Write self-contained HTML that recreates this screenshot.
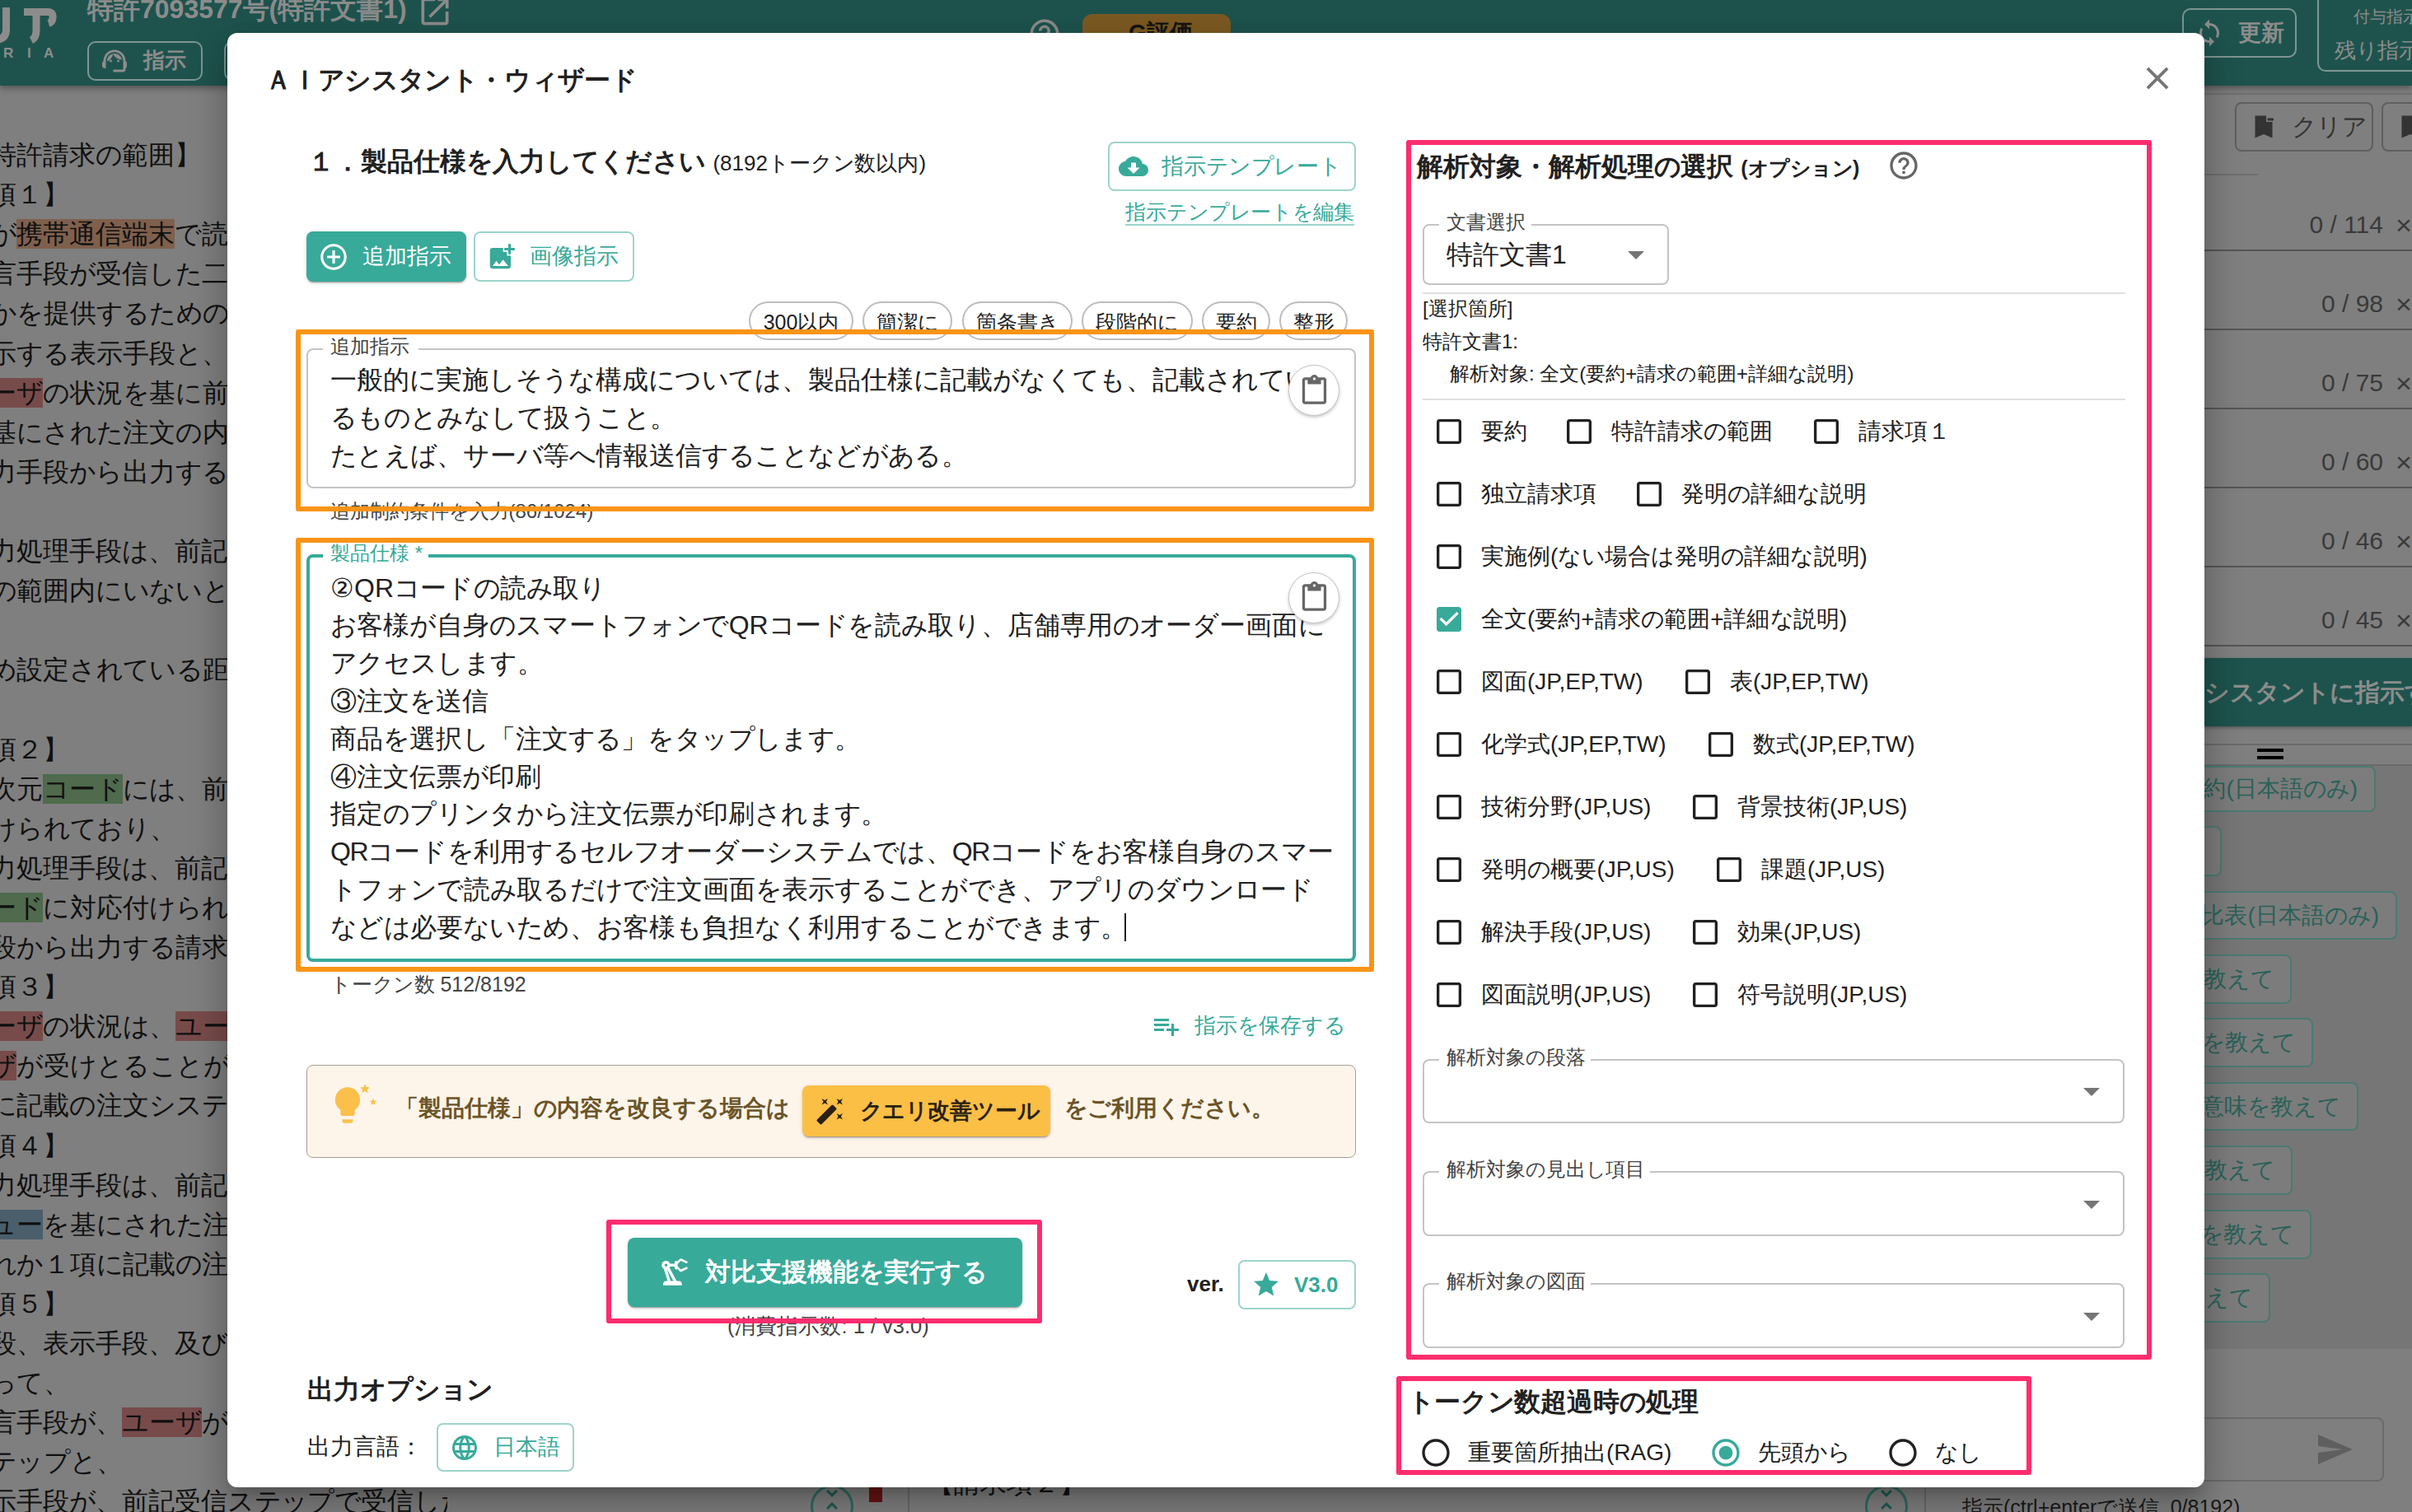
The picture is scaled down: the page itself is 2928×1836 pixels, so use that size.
<!DOCTYPE html><html><head><meta charset="utf-8"><style>
html,body{margin:0;padding:0;}
body{width:2928px;height:1836px;position:relative;overflow:hidden;background:#7f7f7f;font-family:"Liberation Sans",sans-serif;}
.k{letter-spacing:-0.02em}
.a{position:absolute;white-space:nowrap;box-sizing:border-box;}
</style></head><body>
<div class="a" style="left:0px;top:0px;width:2928px;height:104px;background:#1e534d;box-shadow:0 3px 8px rgba(0,0,0,.35)"></div>
<svg class="a" style="left:0;top:0;width:80px;height:60px" viewBox="0 0 80 60"><g fill="none" stroke="#8c8c8c" stroke-width="9" stroke-linecap="butt"><path d="M7.5 9 V36 Q7.5 46 -2 48"/><path d="M29 14.5 H58 Q65 14.5 64 22 Q63.5 27 59 28.5"/><path d="M44 19 V37 Q44 46 38 49"/></g></svg>
<div class="a" style="left:4px;top:53.0px;font-size:17px;line-height:24px;color:#8c8c8c;font-weight:700;">R</div>
<div class="a" style="left:33px;top:53.0px;font-size:17px;line-height:24px;color:#8c8c8c;font-weight:700;">I</div>
<div class="a" style="left:53px;top:53.0px;font-size:17px;line-height:24px;color:#8c8c8c;font-weight:700;">A</div>
<div class="a" style="left:106px;top:-11.0px;font-size:32px;line-height:44px;color:#8c8c8c;font-weight:700;">特許7093577号(特許文書1)</div>
<svg class="a" style="left:506px;top:-8px;width:44px;height:44px;" viewBox="0 0 24 24"><path fill="#8c8c8c" d="M19 19H5V5h7V3H5c-1.11 0-2 .9-2 2v14c0 1.1.89 2 2 2h14c1.1 0 2-.9 2-2v-7h-2v7zM14 3v2h3.59l-9.83 9.83 1.41 1.41L19 6.41V10h2V3h-7z"/></svg>
<div class="a" style="left:106px;top:50px;width:140px;height:48px;border:2px solid #7f9693;border-radius:10px"></div>
<svg class="a" style="left:121px;top:56px;width:36px;height:36px;" viewBox="0 0 24 24"><path fill="#8c8c8c" d="M21 12.22C21 6.73 16.74 3 12 3c-4.69 0-9 3.65-9 9.28-.6.34-1 .98-1 1.72v2c0 1.1.9 2 2 2h1v-6.1c0-3.87 3.13-7 7-7s7 3.13 7 7V19h-8v2h8c1.1 0 2-.9 2-2v-1.22c.59-.31 1-.92 1-1.64v-2.3c0-.7-.41-1.31-1-1.62zM9 13a1 1 0 1 0 0-2 1 1 0 0 0 0 2zm6 0a1 1 0 1 0 0-2 1 1 0 0 0 0 2zM18 11.03C17.52 8.18 15.04 6 12.05 6c-3.03 0-6.29 2.51-6.03 6.45 2.47-1.01 4.33-3.21 4.86-5.89 1.31 2.63 4 4.44 7.12 4.47z"/></svg>
<div class="a" style="left:174px;top:53.0px;font-size:26px;line-height:40px;color:#8c8c8c;font-weight:700;">指示</div>
<div class="a" style="left:272px;top:50px;width:128px;height:48px;border:2px solid #7f9693;border-radius:10px"></div>
<svg class="a" style="left:1247px;top:20px;width:42px;height:42px;" viewBox="0 0 24 24"><path fill="#8c8c8c" d="M11 18h2v-2h-2v2zm1-16C6.48 2 2 6.48 2 12s4.48 10 10 10 10-4.48 10-10S17.52 2 12 2zm0 18c-4.41 0-8-3.59-8-8s3.59-8 8-8 8 3.59 8 8-3.59 8-8 8zm0-14c-2.21 0-4 1.79-4 4h2c0-1.1.9-2 2-2s2 .9 2 2c0 2-3 1.75-3 5h2c0-2.25 3-2.5 3-5 0-2.21-1.79-4-4-4z"/></svg>
<div class="a" style="left:1314px;top:17px;width:180px;height:63px;background:#7d5a22;border-radius:12px"></div>
<div class="a" style="left:1370px;top:20.0px;font-size:28px;line-height:40px;color:#141414;font-weight:700;">G評価</div>
<div class="a" style="left:2649px;top:10px;width:139px;height:60px;border:2px solid #7f9693;border-radius:10px"></div>
<svg class="a" style="left:2664px;top:22px;width:36px;height:36px;" viewBox="0 0 24 24"><path fill="#8c8c8c" d="M12 4V1L8 5l4 4V6c3.31 0 6 2.69 6 6 0 1.01-.25 1.97-.7 2.8l1.46 1.46C19.54 15.03 20 13.57 20 12c0-4.42-3.58-8-8-8zm0 14c-3.31 0-6-2.69-6-6 0-1.01.25-1.97.7-2.8L5.24 7.74C4.46 8.97 4 10.43 4 12c0 4.42 3.58 8 8 8v3l4-4-4-4v3z"/></svg>
<div class="a" style="left:2717px;top:20.0px;font-size:28px;line-height:40px;color:#8c8c8c;font-weight:700;">更新</div>
<div class="a" style="left:2813px;top:-12px;width:147px;height:99px;border:2px solid #7f9693;border-radius:10px"></div>
<div class="a" style="left:2857px;top:5.0px;font-size:20px;line-height:30px;color:#8c8c8c;font-weight:400;">付与指示</div>
<div class="a" style="left:2834px;top:43.0px;font-size:26px;line-height:36px;color:#8c8c8c;font-weight:400;">残<span class="k">り</span>指示</div>
<div class="a" style="left:2676px;top:113px;width:252px;height:2px;background:#6e6e6e"></div>
<div class="a" style="left:2713px;top:124px;width:168px;height:60px;border:2px solid #5f5f5f;border-radius:8px"></div>
<svg class="a" style="left:2730px;top:136px;width:36px;height:36px" viewBox="0 0 24 24"><path fill="#333" d="M5 3h9v5h5v13l-7-3-7 3z"/><path fill="#333" d="M15 5h5v2h-5z"/></svg>
<div class="a" style="left:2782px;top:134.0px;font-size:30px;line-height:40px;color:#333;font-weight:400;"><span class="k">クリア</span></div>
<div class="a" style="left:2891px;top:124px;width:99px;height:60px;border:2px solid #5f5f5f;border-radius:8px"></div>
<svg class="a" style="left:2908px;top:136px;width:36px;height:36px" viewBox="0 0 24 24"><path fill="#333" d="M5 3h14v18l-7-3-7 3z"/></svg>
<div class="a" style="left:2676px;top:211px;width:65px;height:2px;background:#6e6e6e"></div>
<div class="a" style="right:35px;top:253px;font-size:30px;line-height:40px;color:#3a3a3a">0 / 114</div>
<div class="a" style="left:2908px;top:253.0px;font-size:34px;line-height:40px;color:#3a3a3a;font-weight:400;">×</div>
<div class="a" style="left:2676px;top:303px;width:252px;height:2px;background:#555"></div>
<div class="a" style="right:35px;top:349px;font-size:30px;line-height:40px;color:#3a3a3a">0 / 98</div>
<div class="a" style="left:2908px;top:349.0px;font-size:34px;line-height:40px;color:#3a3a3a;font-weight:400;">×</div>
<div class="a" style="left:2676px;top:399px;width:252px;height:2px;background:#555"></div>
<div class="a" style="right:35px;top:445px;font-size:30px;line-height:40px;color:#3a3a3a">0 / 75</div>
<div class="a" style="left:2908px;top:445.0px;font-size:34px;line-height:40px;color:#3a3a3a;font-weight:400;">×</div>
<div class="a" style="left:2676px;top:495px;width:252px;height:2px;background:#555"></div>
<div class="a" style="right:35px;top:541px;font-size:30px;line-height:40px;color:#3a3a3a">0 / 60</div>
<div class="a" style="left:2908px;top:541.0px;font-size:34px;line-height:40px;color:#3a3a3a;font-weight:400;">×</div>
<div class="a" style="left:2676px;top:591px;width:252px;height:2px;background:#555"></div>
<div class="a" style="right:35px;top:637px;font-size:30px;line-height:40px;color:#3a3a3a">0 / 46</div>
<div class="a" style="left:2908px;top:637.0px;font-size:34px;line-height:40px;color:#3a3a3a;font-weight:400;">×</div>
<div class="a" style="left:2676px;top:687px;width:252px;height:2px;background:#555"></div>
<div class="a" style="right:35px;top:733px;font-size:30px;line-height:40px;color:#3a3a3a">0 / 45</div>
<div class="a" style="left:2908px;top:733.0px;font-size:34px;line-height:40px;color:#3a3a3a;font-weight:400;">×</div>
<div class="a" style="left:2676px;top:783px;width:252px;height:2px;background:#555"></div>
<div class="a" style="left:2676px;top:799px;width:252px;height:83px;background:#1e534d;box-shadow:0 2px 4px rgba(0,0,0,.3)"></div>
<div class="a" style="left:2646px;top:819.0px;font-size:30px;line-height:44px;color:#8c8c8c;font-weight:700;"><span class="k">アシスタントに</span>指示<span class="k">する</span></div>
<div class="a" style="left:2676px;top:903px;width:252px;height:2px;background:#6a6a6a"></div>
<div class="a" style="left:2740px;top:909px;width:32px;height:4px;background:#000"></div>
<div class="a" style="left:2740px;top:918px;width:32px;height:4px;background:#000"></div>
<div class="a" style="left:2676px;top:928px;width:252px;height:2px;background:#6a6a6a"></div>
<div class="a" style="left:2676px;top:930px;width:252px;height:708px;background:#767676"></div>
<div class="a" style="left:2560px;top:930px;width:324px;height:56px;border:2px solid #4b7a73;border-radius:8px;background:#7c7c7c"></div>
<div class="a" style="right:66px;top:938.0px;font-size:28px;line-height:40px;color:#2a6159">要約(日本語<span class="k">のみ</span>)</div>
<div class="a" style="left:2560px;top:1003px;width:137px;height:61px;border:2px solid #4b7a73;border-radius:8px;background:#7c7c7c"></div>
<div class="a" style="right:253px;top:1013.5px;font-size:28px;line-height:40px;color:#2a6159"><span class="k">る</span></div>
<div class="a" style="left:2560px;top:1082px;width:350px;height:59px;border:2px solid #4b7a73;border-radius:8px;background:#7c7c7c"></div>
<div class="a" style="right:40px;top:1091.5px;font-size:28px;line-height:40px;color:#2a6159">対比表(日本語<span class="k">のみ</span>)</div>
<div class="a" style="left:2560px;top:1159px;width:222px;height:60px;border:2px solid #4b7a73;border-radius:8px;background:#7c7c7c"></div>
<div class="a" style="right:168px;top:1169.0px;font-size:28px;line-height:40px;color:#2a6159"><span class="k">を</span>教<span class="k">えて</span></div>
<div class="a" style="left:2560px;top:1236px;width:248px;height:60px;border:2px solid #4b7a73;border-radius:8px;background:#7c7c7c"></div>
<div class="a" style="right:142px;top:1246.0px;font-size:28px;line-height:40px;color:#2a6159">味<span class="k">を</span>教<span class="k">えて</span></div>
<div class="a" style="left:2560px;top:1314px;width:303px;height:59px;border:2px solid #4b7a73;border-radius:8px;background:#7c7c7c"></div>
<div class="a" style="right:87px;top:1323.5px;font-size:28px;line-height:40px;color:#2a6159"><span class="k">の</span>意味<span class="k">を</span>教<span class="k">えて</span></div>
<div class="a" style="left:2560px;top:1391px;width:223px;height:60px;border:2px solid #4b7a73;border-radius:8px;background:#7c7c7c"></div>
<div class="a" style="right:167px;top:1401.0px;font-size:28px;line-height:40px;color:#2a6159"><span class="k">を</span>教<span class="k">えて</span></div>
<div class="a" style="left:2560px;top:1469px;width:246px;height:60px;border:2px solid #4b7a73;border-radius:8px;background:#7c7c7c"></div>
<div class="a" style="right:144px;top:1479.0px;font-size:28px;line-height:40px;color:#2a6159">味<span class="k">を</span>教<span class="k">えて</span></div>
<div class="a" style="left:2560px;top:1546px;width:196px;height:60px;border:2px solid #4b7a73;border-radius:8px;background:#7c7c7c"></div>
<div class="a" style="right:194px;top:1556.0px;font-size:28px;line-height:40px;color:#2a6159">教<span class="k">えて</span></div>
<div class="a" style="left:2560px;top:1721px;width:334px;height:78px;border:2px solid #6a6a6a;border-radius:8px"></div>
<svg class="a" style="left:2810px;top:1736px;width:48px;height:48px;" viewBox="0 0 24 24"><path fill="#5f5f5f" d="M2.01 21 23 12 2.01 3 2 10l15 2-15 2z"/></svg>
<div class="a" style="left:2336px;top:1760px;width:2px;height:76px;background:#6a6a6a"></div>
<div class="a" style="left:2264px;top:1803px;width:52px;height:52px;border:3px solid #2f6b63;border-radius:50%"></div>
<svg class="a" style="left:2272px;top:1803px;width:36px;height:36px;" viewBox="0 0 24 24"><path fill="#1f5a52" d="M7.41 18.59 8.83 20 12 16.83 15.17 20l1.41-1.41L12 14l-4.59 4.59zm9.18-13.18L15.17 4 12 7.17 8.83 4 7.41 5.41 12 10l4.59-4.59z"/></svg>
<div class="a" style="left:2382px;top:1812.0px;font-size:25px;line-height:36px;color:#1a1a1a;font-weight:400;">指示(ctrl+enter<span class="k">で</span>送信, 0/8192)</div>
<div class="a" style="left:0;top:0;width:543px;height:1836px;overflow:hidden">
<div class="a" style="left:-12px;top:164.0px;font-size:32px;line-height:48px;color:#101010">特許請求<span class="k">の</span>範囲】</div>
<div class="a" style="left:-12px;top:212.1px;font-size:32px;line-height:48px;color:#101010">項１】</div>
<div class="a" style="left:-12px;top:260.2px;font-size:32px;line-height:48px;color:#101010"><span class="k">が</span><span style="background:#7f604d">携帯通信端末</span><span class="k">で</span>読</div>
<div class="a" style="left:-12px;top:308.3px;font-size:32px;line-height:48px;color:#101010">言手段<span class="k">が</span>受信<span class="k">した</span>二</div>
<div class="a" style="left:-12px;top:356.4px;font-size:32px;line-height:48px;color:#101010"><span class="k">かを</span>提供<span class="k">するための</span></div>
<div class="a" style="left:-12px;top:404.5px;font-size:32px;line-height:48px;color:#101010">示<span class="k">する</span>表示手段<span class="k">と</span>、</div>
<div class="a" style="left:-12px;top:452.6px;font-size:32px;line-height:48px;color:#101010"><span style="background:#784b4b">ー<span class="k">ザ</span></span><span class="k">の</span>状況<span class="k">を</span>基<span class="k">に</span>前</div>
<div class="a" style="left:-12px;top:500.7px;font-size:32px;line-height:48px;color:#101010">基<span class="k">にされた</span>注文<span class="k">の</span>内</div>
<div class="a" style="left:-12px;top:548.8px;font-size:32px;line-height:48px;color:#101010">力手段<span class="k">から</span>出力<span class="k">する</span></div>
<div class="a" style="left:-12px;top:596.9px;font-size:32px;line-height:48px;color:#101010"></div>
<div class="a" style="left:-12px;top:645.0px;font-size:32px;line-height:48px;color:#101010">力処理手段<span class="k">は</span>、前記</div>
<div class="a" style="left:-12px;top:693.1px;font-size:32px;line-height:48px;color:#101010"><span class="k">の</span>範囲内<span class="k">にいないと</span></div>
<div class="a" style="left:-12px;top:741.2px;font-size:32px;line-height:48px;color:#101010"></div>
<div class="a" style="left:-12px;top:789.3px;font-size:32px;line-height:48px;color:#101010"><span class="k">め</span>設定<span class="k">されている</span>距</div>
<div class="a" style="left:-12px;top:837.4px;font-size:32px;line-height:48px;color:#101010"></div>
<div class="a" style="left:-12px;top:885.5px;font-size:32px;line-height:48px;color:#101010">項２】</div>
<div class="a" style="left:-12px;top:933.6px;font-size:32px;line-height:48px;color:#101010">次元<span style="background:#4f6a4d"><span class="k">コ</span>ー<span class="k">ド</span></span><span class="k">には</span>、前</div>
<div class="a" style="left:-12px;top:981.7px;font-size:32px;line-height:48px;color:#101010"><span class="k">けられており</span>、</div>
<div class="a" style="left:-12px;top:1029.8px;font-size:32px;line-height:48px;color:#101010">力処理手段<span class="k">は</span>、前記</div>
<div class="a" style="left:-12px;top:1077.9px;font-size:32px;line-height:48px;color:#101010"><span style="background:#4f6a4d">ー<span class="k">ド</span></span><span class="k">に</span>対応付<span class="k">けられ</span></div>
<div class="a" style="left:-12px;top:1126.0px;font-size:32px;line-height:48px;color:#101010">段<span class="k">から</span>出力<span class="k">する</span>請求</div>
<div class="a" style="left:-12px;top:1174.1px;font-size:32px;line-height:48px;color:#101010">項３】</div>
<div class="a" style="left:-12px;top:1222.2px;font-size:32px;line-height:48px;color:#101010"><span style="background:#784b4b">ー<span class="k">ザ</span></span><span class="k">の</span>状況<span class="k">は</span>、<span style="background:#784b4b"><span class="k">ユ</span>ー</span></div>
<div class="a" style="left:-12px;top:1270.3px;font-size:32px;line-height:48px;color:#101010"><span style="background:#784b4b"><span class="k">ザ</span></span><span class="k">が</span>受<span class="k">けとることが</span></div>
<div class="a" style="left:-12px;top:1318.4px;font-size:32px;line-height:48px;color:#101010"><span class="k">に</span>記載<span class="k">の</span>注文<span class="k">システ</span></div>
<div class="a" style="left:-12px;top:1366.5px;font-size:32px;line-height:48px;color:#101010">項４】</div>
<div class="a" style="left:-12px;top:1414.6px;font-size:32px;line-height:48px;color:#101010">力処理手段<span class="k">は</span>、前記</div>
<div class="a" style="left:-12px;top:1462.7px;font-size:32px;line-height:48px;color:#101010"><span style="background:#4a5e6c"><span class="k">ュ</span>ー</span><span class="k">を</span>基<span class="k">にされた</span>注</div>
<div class="a" style="left:-12px;top:1510.8px;font-size:32px;line-height:48px;color:#101010"><span class="k">れか</span>１項<span class="k">に</span>記載<span class="k">の</span>注</div>
<div class="a" style="left:-12px;top:1558.9px;font-size:32px;line-height:48px;color:#101010">項５】</div>
<div class="a" style="left:-12px;top:1607.0px;font-size:32px;line-height:48px;color:#101010">段、表示手段、及<span class="k">び</span></div>
<div class="a" style="left:-12px;top:1655.1px;font-size:32px;line-height:48px;color:#101010"><span class="k">って</span>、</div>
<div class="a" style="left:-12px;top:1703.2px;font-size:32px;line-height:48px;color:#101010">言手段<span class="k">が</span>、<span style="background:#784b4b"><span class="k">ユ</span>ー<span class="k">ザ</span></span><span class="k">が</span></div>
<div class="a" style="left:-12px;top:1751.3px;font-size:32px;line-height:48px;color:#101010"><span class="k">テップと</span>、</div>
<div class="a" style="left:-12px;top:1799.4px;font-size:32px;line-height:48px;color:#101010">示手段<span class="k">が</span>、前記受信<span class="k">ステップで</span>受信<span class="k">した</span></div>
</div>
<div class="a" style="left:984px;top:1803px;width:52px;height:52px;border:3px solid #2f6b63;border-radius:50%"></div>
<svg class="a" style="left:992px;top:1803px;width:36px;height:36px;" viewBox="0 0 24 24"><path fill="#1f5a52" d="M7.41 18.59 8.83 20 12 16.83 15.17 20l1.41-1.41L12 14l-4.59 4.59zm9.18-13.18L15.17 4 12 7.17 8.83 4 7.41 5.41 12 10l4.59-4.59z"/></svg>
<div class="a" style="left:1055px;top:1800px;width:16px;height:24px;background:#6a1414"></div>
<div class="a" style="left:1102px;top:1760px;width:2px;height:76px;background:#6a6a6a"></div>
<div class="a" style="left:1126px;top:1777.0px;font-size:32px;line-height:48px;color:#101010;font-weight:400;">【請求項２】</div>
<div class="a" style="left:276px;top:40px;width:2400px;height:1766px;background:#fff;border-radius:12px;box-shadow:0 11px 15px -7px rgba(0,0,0,.2),0 24px 38px 3px rgba(0,0,0,.14),0 9px 46px 8px rgba(0,0,0,.12)"></div>
<div class="a" style="left:322px;top:73.0px;font-size:32px;line-height:48px;color:#212121;font-weight:700;">ＡＩ<span class="k">アシスタント</span>・<span class="k">ウィザ</span>ー<span class="k">ド</span></div>
<svg class="a" style="left:2596px;top:72px;width:46px;height:46px;" viewBox="0 0 24 24"><path fill="#757575" d="M19 6.41 17.59 5 12 10.59 6.41 5 5 6.41 10.59 12 5 17.59 6.41 19 12 13.41 17.59 19 19 17.59 13.41 12z"/></svg>
<div class="a" style="left:374px;top:172.0px;font-size:32px;line-height:48px;color:#212121;font-weight:700;">１．製品仕様<span class="k">を</span>入力<span class="k">してください</span> <span style="font-size:26px;font-weight:400">(8192<span class="k">ト</span>ー<span class="k">クン</span>数以内)</span></div>
<div class="a" style="left:1345px;top:172px;width:301px;height:60px;border:2px solid #9dd4cc;border-radius:8px"></div>
<svg class="a" style="left:1358px;top:184px;width:36px;height:36px;" viewBox="0 0 24 24"><path fill="#38aa9a" d="M19.35 10.04C18.67 6.59 15.64 4 12 4 9.11 4 6.6 5.64 5.35 8.04 2.34 8.36 0 10.91 0 14c0 3.31 2.69 6 6 6h13c2.76 0 5-2.24 5-5 0-2.64-2.05-4.78-4.65-4.96zM17 13l-5 5-5-5h3V9h4v4h3z"/></svg>
<div class="a" style="left:1410px;top:182.0px;font-size:27px;line-height:40px;color:#38aa9a;font-weight:400;">指示<span class="k">テンプレ</span>ー<span class="k">ト</span></div>
<div class="a" style="left:1366px;top:240.0px;font-size:24.6px;line-height:36px;color:#38aa9a;font-weight:400;text-decoration:underline;text-decoration-color:#9dd4cc;text-underline-offset:6px">指示<span class="k">テンプレ</span>ー<span class="k">トを</span>編集</div>
<div class="a" style="left:372px;top:281px;width:194px;height:61px;background:#38aa9a;border-radius:8px;box-shadow:0 3px 1px -2px rgba(0,0,0,.2),0 2px 2px 0 rgba(0,0,0,.14),0 1px 5px 0 rgba(0,0,0,.12)"></div>
<svg class="a" style="left:386px;top:293px;width:38px;height:38px;" viewBox="0 0 24 24"><path fill="#fff" d="M13 7h-2v4H7v2h4v4h2v-4h4v-2h-4V7zm-1-5C6.48 2 2 6.48 2 12s4.48 10 10 10 10-4.48 10-10S17.52 2 12 2zm0 18c-4.41 0-8-3.59-8-8s3.59-8 8-8 8 3.59 8 8-3.59 8-8 8z"/></svg>
<div class="a" style="left:440px;top:291.0px;font-size:27px;line-height:40px;color:#fff;font-weight:400;">追加指示</div>
<div class="a" style="left:575px;top:281px;width:195px;height:61px;border:2px solid #9dd4cc;border-radius:8px"></div>
<svg class="a" style="left:590px;top:293px;width:38px;height:38px;" viewBox="0 0 24 24"><path fill="#38aa9a" d="M19 7v2.99s-1.99.01-2 0V7h-3s.01-1.99 0-2h3V2h2v3h3v2h-3zm-3 4V8h-3V5H5c-1.1 0-2 .9-2 2v12c0 1.1.9 2 2 2h12c1.1 0 2-.9 2-2v-8h-3zM5 19l3-4 2 3 3-4 4 5H5z"/></svg>
<div class="a" style="left:643px;top:291.0px;font-size:27px;line-height:40px;color:#38aa9a;font-weight:400;">画像指示</div>
<div class="a" style="left:909px;top:366px;width:127px;height:47px;border:2px solid #bdbdbd;border-radius:24px;background:#fff"></div>
<div class="a" style="left:909px;width:127px;top:371px;font-size:25px;line-height:40px;text-align:center;color:#212121">300以内</div>
<div class="a" style="left:1047px;top:366px;width:109px;height:47px;border:2px solid #bdbdbd;border-radius:24px;background:#fff"></div>
<div class="a" style="left:1047px;width:109px;top:371px;font-size:25px;line-height:40px;text-align:center;color:#212121">簡潔<span class="k">に</span></div>
<div class="a" style="left:1168px;top:366px;width:134px;height:47px;border:2px solid #bdbdbd;border-radius:24px;background:#fff"></div>
<div class="a" style="left:1168px;width:134px;top:371px;font-size:25px;line-height:40px;text-align:center;color:#212121">箇条書<span class="k">き</span></div>
<div class="a" style="left:1313px;top:366px;width:135px;height:47px;border:2px solid #bdbdbd;border-radius:24px;background:#fff"></div>
<div class="a" style="left:1313px;width:135px;top:371px;font-size:25px;line-height:40px;text-align:center;color:#212121">段階的<span class="k">に</span></div>
<div class="a" style="left:1459px;top:366px;width:83px;height:47px;border:2px solid #bdbdbd;border-radius:24px;background:#fff"></div>
<div class="a" style="left:1459px;width:83px;top:371px;font-size:25px;line-height:40px;text-align:center;color:#212121">要約</div>
<div class="a" style="left:1553px;top:366px;width:83px;height:47px;border:2px solid #bdbdbd;border-radius:24px;background:#fff"></div>
<div class="a" style="left:1553px;width:83px;top:371px;font-size:25px;line-height:40px;text-align:center;color:#212121">整形</div>
<div class="a" style="left:372px;top:423px;width:1274px;height:170px;border:2px solid #c4c4c4;border-radius:8px"></div>
<div class="a" style="left:392px;top:410px;width:116px;height:26px;background:#fff"></div>
<div class="a" style="left:401px;top:406.0px;font-size:24px;line-height:30px;color:#444;font-weight:400;">追加指示</div>
<div class="a" style="left:401px;top:438.0px;font-size:32px;line-height:46px;color:#212121;font-weight:400;">一般的<span class="k">に</span>実施<span class="k">しそうな</span>構成<span class="k">については</span>、製品仕様<span class="k">に</span>記載<span class="k">がなくても</span>、記載<span class="k">されてい</span></div>
<div class="a" style="left:401px;top:484.0px;font-size:32px;line-height:46px;color:#212121;font-weight:400;"><span class="k">るものとみなして</span>扱<span class="k">うこと</span>。</div>
<div class="a" style="left:401px;top:530.0px;font-size:32px;line-height:46px;color:#212121;font-weight:400;"><span class="k">たとえば</span>、<span class="k">サ</span>ー<span class="k">バ</span>等<span class="k">へ</span>情報送信<span class="k">することなどがある</span>。</div>
<div class="a" style="left:1564px;top:443px;width:62px;height:62px;background:#fff;border:1.5px solid #c6c6c6;border-radius:50%;box-shadow:0 2px 4px -1px rgba(0,0,0,.2),0 1px 4px 0 rgba(0,0,0,.1)"></div>
<svg class="a" style="left:1575.5px;top:454.5px;width:39px;height:39px;" viewBox="0 0 24 24"><path fill="#666" d="M19 2h-4.18C14.4.84 13.3 0 12 0c-1.3 0-2.4.84-2.82 2H5c-1.1 0-2 .9-2 2v16c0 1.1.9 2 2 2h14c1.1 0 2-.9 2-2V4c0-1.1-.9-2-2-2zm-7 0c.55 0 1 .45 1 1s-.45 1-1 1-1-.45-1-1 .45-1 1-1zm7 18H5V4h2v3h10V4h2v16z"/></svg>
<div class="a" style="left:401px;top:606.0px;font-size:24px;line-height:30px;color:#444;font-weight:400;">追加制約条件<span class="k">を</span>入力(86/1024)</div>
<div class="a" style="left:359px;top:400px;width:1309px;height:221px;border:6px solid #f99417;border-radius:3px"></div>
<div class="a" style="left:372px;top:673px;width:1274px;height:495px;border:4px solid #38aa9a;border-radius:8px"></div>
<div class="a" style="left:392px;top:660px;width:128px;height:30px;background:#fff"></div>
<div class="a" style="left:401px;top:657.0px;font-size:24px;line-height:30px;color:#38aa9a;font-weight:400;">製品仕様 *</div>
<div class="a" style="left:401px;top:690.5px;font-size:32px;line-height:46px;color:#212121;font-weight:400;">②QR<span class="k">コ</span>ー<span class="k">ドの</span>読<span class="k">み</span>取<span class="k">り</span></div>
<div class="a" style="left:401px;top:736.3px;font-size:32px;line-height:46px;color:#212121;font-weight:400;"><span class="k">お</span>客様<span class="k">が</span>自身<span class="k">のスマ</span>ー<span class="k">トフォンで</span>QR<span class="k">コ</span>ー<span class="k">ドを</span>読<span class="k">み</span>取<span class="k">り</span>、店舗専用<span class="k">のオ</span>ー<span class="k">ダ</span>ー画面<span class="k">に</span></div>
<div class="a" style="left:401px;top:782.1px;font-size:32px;line-height:46px;color:#212121;font-weight:400;"><span class="k">アクセスします</span>。</div>
<div class="a" style="left:401px;top:827.9px;font-size:32px;line-height:46px;color:#212121;font-weight:400;">③注文<span class="k">を</span>送信</div>
<div class="a" style="left:401px;top:873.7px;font-size:32px;line-height:46px;color:#212121;font-weight:400;">商品<span class="k">を</span>選択<span class="k">し</span>「注文<span class="k">する</span>」<span class="k">をタップします</span>。</div>
<div class="a" style="left:401px;top:919.5px;font-size:32px;line-height:46px;color:#212121;font-weight:400;">④注文伝票<span class="k">が</span>印刷</div>
<div class="a" style="left:401px;top:965.3px;font-size:32px;line-height:46px;color:#212121;font-weight:400;">指定<span class="k">のプリンタから</span>注文伝票<span class="k">が</span>印刷<span class="k">されます</span>。</div>
<div class="a" style="left:401px;top:1011.1px;font-size:32px;line-height:46px;color:#212121;font-weight:400;"><span style="letter-spacing:-1.5px">QR</span><span class="k">コ</span>ー<span class="k">ドを</span>利用<span class="k">するセルフオ</span>ー<span class="k">ダ</span>ー<span class="k">システムでは</span>、<span style="letter-spacing:-1.5px">QR</span><span class="k">コ</span>ー<span class="k">ドをお</span>客様自身<span class="k">のスマ</span>ー</div>
<div class="a" style="left:401px;top:1056.9px;font-size:32px;line-height:46px;color:#212121;font-weight:400;"><span class="k">トフォンで</span>読<span class="k">み</span>取<span class="k">るだけで</span>注文画面<span class="k">を</span>表示<span class="k">することができ</span>、<span class="k">アプリのダウンロ</span>ー<span class="k">ド</span></div>
<div class="a" style="left:401px;top:1102.7px;font-size:32px;line-height:46px;color:#212121;font-weight:400;"><span class="k">などは</span>必要<span class="k">ないため</span>、<span class="k">お</span>客様<span class="k">も</span>負担<span class="k">なく</span>利用<span class="k">することができます</span>。<span style="display:inline-block;width:2px;height:34px;background:#212121;vertical-align:-6px;margin-left:-3px"></span></div>
<div class="a" style="left:1564px;top:695px;width:62px;height:62px;background:#fff;border:1.5px solid #c6c6c6;border-radius:50%;box-shadow:0 2px 4px -1px rgba(0,0,0,.2),0 1px 4px 0 rgba(0,0,0,.1)"></div>
<svg class="a" style="left:1575.5px;top:706px;width:39px;height:39px;" viewBox="0 0 24 24"><path fill="#666" d="M19 2h-4.18C14.4.84 13.3 0 12 0c-1.3 0-2.4.84-2.82 2H5c-1.1 0-2 .9-2 2v16c0 1.1.9 2 2 2h14c1.1 0 2-.9 2-2V4c0-1.1-.9-2-2-2zm-7 0c.55 0 1 .45 1 1s-.45 1-1 1-1-.45-1-1 .45-1 1-1zm7 18H5V4h2v3h10V4h2v16z"/></svg>
<div class="a" style="left:359px;top:653px;width:1309px;height:527px;border:6px solid #f99417;border-radius:3px"></div>
<div class="a" style="left:401px;top:1180.0px;font-size:25px;line-height:30px;color:#444;font-weight:400;"><span class="k">ト</span>ー<span class="k">クン</span>数 512/8192</div>
<svg class="a" style="left:1398px;top:1228px;width:36px;height:36px;" viewBox="0 0 24 24"><path fill="#38aa9a" d="M14 10H2v2h12v-2zm0-4H2v2h12V6zm4 8v-4h-2v4h-4v2h4v4h2v-4h4v-2h-4zM2 16h8v-2H2v2z"/></svg>
<div class="a" style="left:1450px;top:1225.0px;font-size:26px;line-height:40px;color:#38aa9a;font-weight:400;">指示<span class="k">を</span>保存<span class="k">する</span></div>
<div class="a" style="left:372px;top:1293px;width:1274px;height:113px;background:#fdf5ea;border:1.5px solid #a89f94;border-radius:8px"></div>
<svg class="a" style="left:396px;top:1316px;width:52px;height:52px;" viewBox="0 0 24 24"><path fill="#fbbf4c" d="M9 21c0 .55.45 1 1 1h4c.55 0 1-.45 1-1v-1H9v1zm3-19C8.14 2 5 5.14 5 9c0 2.38 1.19 4.47 3 5.74V17c0 .55.45 1 1 1h6c.55 0 1-.45 1-1v-2.26c1.81-1.27 3-3.36 3-5.74 0-3.86-3.14-7-7-7z"/></svg>
<svg class="a" style="left:436px;top:1315px;width:14px;height:14px;" viewBox="0 0 24 24"><path fill="#fbbf4c" d="M12 17.27 18.18 21l-1.64-7.03L22 9.24l-7.19-.61L12 2 9.19 8.63 2 9.24l5.46 4.73L5.82 21z"/></svg>
<svg class="a" style="left:448px;top:1333px;width:10px;height:10px;" viewBox="0 0 24 24"><path fill="#fbbf4c" d="M12 17.27 18.18 21l-1.64-7.03L22 9.24l-7.19-.61L12 2 9.19 8.63 2 9.24l5.46 4.73L5.82 21z"/></svg>
<div class="a" style="left:480px;top:1326.0px;font-size:28px;line-height:40px;color:#6b5428;font-weight:700;">「製品仕様」<span class="k">の</span>内容<span class="k">を</span>改良<span class="k">する</span>場合<span class="k">は</span></div>
<div class="a" style="left:974px;top:1318px;width:301px;height:62px;background:#fcbf45;border-radius:8px;box-shadow:0 3px 1px -2px rgba(0,0,0,.2),0 2px 2px 0 rgba(0,0,0,.14),0 1px 5px 0 rgba(0,0,0,.12)"></div>
<svg class="a" style="left:990px;top:1331px;width:36px;height:36px;" viewBox="0 0 24 24"><path fill="#2a2114" d="M7.5 5.6 10 7 8.6 4.5 10 2 7.5 3.4 5 2l1.4 2.5L5 7zm12 9.8L17 14l1.4 2.5L17 19l2.5-1.4L22 19l-1.4-2.5L22 14zM22 2l-2.5 1.4L17 2l1.4 2.5L17 7l2.5-1.4L22 7l-1.4-2.5zm-7.63 5.29a.9959.9959 0 0 0-1.41 0L1.29 18.96c-.39.39-.39 1.02 0 1.41l2.34 2.34c.39.39 1.02.39 1.41 0L16.7 11.05c.39-.39.39-1.02 0-1.41l-2.33-2.35z"/></svg>
<div class="a" style="left:1044px;top:1329.0px;font-size:26.5px;line-height:40px;color:#2a2114;font-weight:700;"><span class="k">クエリ</span>改善<span class="k">ツ</span>ー<span class="k">ル</span></div>
<div class="a" style="left:1292px;top:1326.0px;font-size:28px;line-height:40px;color:#6b5428;font-weight:700;"><span class="k">をご</span>利用<span class="k">ください</span>。</div>
<div class="a" style="left:762px;top:1503px;width:479px;height:84px;background:#38aa9a;border-radius:8px;box-shadow:0 3px 1px -2px rgba(0,0,0,.2),0 2px 2px 0 rgba(0,0,0,.14),0 1px 5px 0 rgba(0,0,0,.12)"></div>
<svg class="a" style="left:798px;top:1524px;width:42px;height:42px;" viewBox="0 0 24 24"><path fill="#fff" d="M19.93 8.35l-3.6 1.68L14 7.7V6.3l2.33-2.33 3.6 1.68c.38.18.82.01 1-.36.18-.38.01-.82-.36-1l-3.92-1.83c-.38-.18-.83-.1-1.13.2L13.78 4.4c-.18-.24-.46-.4-.78-.4-.55 0-1 .45-1 1v1H8.82C8.4 4.84 7.3 4 6 4 4.34 4 3 5.34 3 7c0 1.1.6 2.05 1.48 2.57L7.08 18H6c-1.1 0-2 .9-2 2v1h13v-1c0-1.1-.9-2-2-2h-1.62L8.410 8.77c.17-.24.31-.49.41-.77H12v1c0 .55.45 1 1 1 .32 0 .6-.16.78-.4l1.74 1.74c.3.3.75.38 1.13.2l3.920-1.83c.38-.18.54-.62.36-1-.18-.37-.62-.54-1-.36zM6 8c-.55 0-1-.44-1-1 0-.55.45-1 1-1s1 .45 1 1c0 .56-.45 1-1 1zm5.11 10H9.17l-2.46-8h.1l4.3 8z"/></svg>
<div class="a" style="left:856px;top:1523.0px;font-size:31px;line-height:44px;color:#fff;font-weight:700;">対比支援機能<span class="k">を</span>実行<span class="k">する</span></div>
<div class="a" style="left:883px;top:1595.0px;font-size:25.5px;line-height:30px;color:#444;font-weight:400;">(消費指示数: 1 / v3.0)</div>
<div class="a" style="left:736px;top:1481px;width:529px;height:126px;border:6px solid #fc2d6e;border-radius:3px"></div>
<div class="a" style="left:1441px;top:1541.0px;font-size:26px;line-height:36px;color:#212121;font-weight:700;">ver.</div>
<div class="a" style="left:1503px;top:1530px;width:143px;height:60px;border:2px solid #9dd4cc;border-radius:8px"></div>
<svg class="a" style="left:1519px;top:1542px;width:36px;height:36px;" viewBox="0 0 24 24"><path fill="#38aa9a" d="M12 17.27 18.18 21l-1.64-7.03L22 9.24l-7.19-.61L12 2 9.19 8.63 2 9.24l5.46 4.73L5.82 21z"/></svg>
<div class="a" style="left:1571px;top:1542.0px;font-size:26px;line-height:36px;color:#38aa9a;font-weight:700;">V3.0</div>
<div class="a" style="left:373px;top:1665.0px;font-size:32px;line-height:44px;color:#212121;font-weight:700;">出力<span class="k">オプション</span></div>
<div class="a" style="left:373px;top:1737.0px;font-size:28px;line-height:40px;color:#212121;font-weight:400;">出力言語：</div>
<div class="a" style="left:530px;top:1728px;width:167px;height:59px;border:2px solid #9dd4cc;border-radius:8px"></div>
<svg class="a" style="left:546px;top:1740px;width:36px;height:36px;" viewBox="0 0 24 24"><path fill="#38aa9a" d="M11.99 2C6.47 2 2 6.48 2 12s4.47 10 9.99 10C17.52 22 22 17.52 22 12S17.52 2 11.99 2zm6.93 6h-2.95c-.32-1.25-.78-2.45-1.38-3.56 1.84.63 3.37 1.91 4.33 3.56zM12 4.04c.83 1.2 1.48 2.53 1.91 3.96h-3.82c.43-1.43 1.08-2.76 1.91-3.96zM4.26 14C4.1 13.36 4 12.690 4 12s.1-1.36.26-2h3.38c-.08.66-.14 1.32-.14 2 0 .68.06 1.34.14 2H4.26zm.82 2h2.95c.32 1.25.78 2.45 1.38 3.56-1.84-.63-3.37-1.9-4.33-3.56zm2.95-8H5.08c.96-1.66 2.49-2.93 4.33-3.56C8.81 5.55 8.35 6.75 8.03 8zM12 19.96c-.83-1.2-1.48-2.53-1.91-3.96h3.820c-.43 1.43-1.08 2.76-1.91 3.96zM14.34 14H9.66c-.09-.66-.16-1.32-.16-2 0-.68.07-1.35.16-2h4.68c.09.65.16 1.32.16 2 0 .68-.07 1.34-.16 2zm.25 5.56c.6-1.11 1.06-2.31 1.38-3.56h2.95c-.96 1.65-2.49 2.93-4.33 3.56zM16.36 14c.08-.66.14-1.32.14-2 0-.68-.06-1.34-.14-2h3.38c.16.64.26 1.31.26 2s-.1 1.36-.26 2h-3.38z"/></svg>
<div class="a" style="left:599px;top:1737.0px;font-size:27px;line-height:40px;color:#38aa9a;font-weight:400;">日本語</div>
<div class="a" style="left:1720px;top:178.0px;font-size:32px;line-height:48px;color:#212121;font-weight:700;">解析対象・解析処理<span class="k">の</span>選択 <span style="font-size:25px">(<span class="k">オプション</span>)</span></div>
<svg class="a" style="left:2291px;top:181px;width:40px;height:40px;" viewBox="0 0 24 24"><path fill="#666" d="M11 18h2v-2h-2v2zm1-16C6.48 2 2 6.48 2 12s4.48 10 10 10 10-4.48 10-10S17.52 2 12 2zm0 18c-4.41 0-8-3.59-8-8s3.59-8 8-8 8 3.59 8 8-3.59 8-8 8zm0-14c-2.21 0-4 1.79-4 4h2c0-1.1.9-2 2-2s2 .9 2 2c0 2-3 1.75-3 5h2c0-2.25 3-2.5 3-5 0-2.21-1.79-4-4-4z"/></svg>
<div class="a" style="left:1727px;top:272px;width:299px;height:74px;border:2px solid #c4c4c4;border-radius:8px"></div>
<div class="a" style="left:1747px;top:258px;width:112px;height:28px;background:#fff"></div>
<div class="a" style="left:1756px;top:255.0px;font-size:24px;line-height:30px;color:#444;font-weight:400;">文書選択</div>
<div class="a" style="left:1756px;top:287.0px;font-size:32px;line-height:44px;color:#212121;font-weight:400;">特許文書1</div>
<svg class="a" style="left:1962px;top:285.0px;width:48px;height:48px;" viewBox="0 0 24 24"><path fill="#757575" d="M7 10l5 5 5-5z"/></svg>
<div class="a" style="left:1727px;top:355px;width:853px;height:2px;background:#e0e0e0"></div>
<div class="a" style="left:1727px;top:358.0px;font-size:24px;line-height:34px;color:#212121;font-weight:400;">[選択箇所]</div>
<div class="a" style="left:1727px;top:398.0px;font-size:24px;line-height:34px;color:#212121;font-weight:400;">特許文書1:</div>
<div class="a" style="left:1760px;top:437.0px;font-size:24px;line-height:34px;color:#212121;font-weight:400;">解析対象: 全文(要約+請求<span class="k">の</span>範囲+詳細<span class="k">な</span>説明)</div>
<div class="a" style="left:1727px;top:484px;width:853px;height:2px;background:#e0e0e0"></div>
<svg class="a" style="left:1739px;top:503.5px;width:40px;height:40px;" viewBox="0 0 24 24"><path fill="#212121" d="M19 5v14H5V5h14m0-2H5c-1.1 0-2 .9-2 2v14c0 1.1.9 2 2 2h14c1.1 0 2-.9 2-2V5c0-1.1-.9-2-2-2z"/></svg>
<div class="a" style="left:1798px;top:503.5px;font-size:28px;line-height:40px;color:#212121;font-weight:400;">要約</div>
<svg class="a" style="left:1897px;top:503.5px;width:40px;height:40px;" viewBox="0 0 24 24"><path fill="#212121" d="M19 5v14H5V5h14m0-2H5c-1.1 0-2 .9-2 2v14c0 1.1.9 2 2 2h14c1.1 0 2-.9 2-2V5c0-1.1-.9-2-2-2z"/></svg>
<div class="a" style="left:1956px;top:503.5px;font-size:28px;line-height:40px;color:#212121;font-weight:400;">特許請求<span class="k">の</span>範囲</div>
<svg class="a" style="left:2197px;top:503.5px;width:40px;height:40px;" viewBox="0 0 24 24"><path fill="#212121" d="M19 5v14H5V5h14m0-2H5c-1.1 0-2 .9-2 2v14c0 1.1.9 2 2 2h14c1.1 0 2-.9 2-2V5c0-1.1-.9-2-2-2z"/></svg>
<div class="a" style="left:2256px;top:503.5px;font-size:28px;line-height:40px;color:#212121;font-weight:400;">請求項１</div>
<svg class="a" style="left:1739px;top:579.5px;width:40px;height:40px;" viewBox="0 0 24 24"><path fill="#212121" d="M19 5v14H5V5h14m0-2H5c-1.1 0-2 .9-2 2v14c0 1.1.9 2 2 2h14c1.1 0 2-.9 2-2V5c0-1.1-.9-2-2-2z"/></svg>
<div class="a" style="left:1798px;top:579.5px;font-size:28px;line-height:40px;color:#212121;font-weight:400;">独立請求項</div>
<svg class="a" style="left:1982px;top:579.5px;width:40px;height:40px;" viewBox="0 0 24 24"><path fill="#212121" d="M19 5v14H5V5h14m0-2H5c-1.1 0-2 .9-2 2v14c0 1.1.9 2 2 2h14c1.1 0 2-.9 2-2V5c0-1.1-.9-2-2-2z"/></svg>
<div class="a" style="left:2041px;top:579.5px;font-size:28px;line-height:40px;color:#212121;font-weight:400;">発明<span class="k">の</span>詳細<span class="k">な</span>説明</div>
<svg class="a" style="left:1739px;top:655.5px;width:40px;height:40px;" viewBox="0 0 24 24"><path fill="#212121" d="M19 5v14H5V5h14m0-2H5c-1.1 0-2 .9-2 2v14c0 1.1.9 2 2 2h14c1.1 0 2-.9 2-2V5c0-1.1-.9-2-2-2z"/></svg>
<div class="a" style="left:1798px;top:655.5px;font-size:28px;line-height:40px;color:#212121;font-weight:400;">実施例(<span class="k">ない</span>場合<span class="k">は</span>発明<span class="k">の</span>詳細<span class="k">な</span>説明)</div>
<svg class="a" style="left:1739px;top:731.5px;width:40px;height:40px;" viewBox="0 0 24 24"><path fill="#38aa9a" d="M19 3H5c-1.11 0-2 .9-2 2v14c0 1.1.89 2 2 2h14c1.11 0 2-.9 2-2V5c0-1.1-.89-2-2-2zm-9 14l-5-5 1.41-1.41L10 14.17l7.59-7.59L19 8l-9 9z"/></svg>
<div class="a" style="left:1798px;top:731.5px;font-size:28px;line-height:40px;color:#212121;font-weight:400;">全文(要約+請求<span class="k">の</span>範囲+詳細<span class="k">な</span>説明)</div>
<svg class="a" style="left:1739px;top:807.5px;width:40px;height:40px;" viewBox="0 0 24 24"><path fill="#212121" d="M19 5v14H5V5h14m0-2H5c-1.1 0-2 .9-2 2v14c0 1.1.9 2 2 2h14c1.1 0 2-.9 2-2V5c0-1.1-.9-2-2-2z"/></svg>
<div class="a" style="left:1798px;top:807.5px;font-size:28px;line-height:40px;color:#212121;font-weight:400;">図面(JP,EP,TW)</div>
<svg class="a" style="left:2041px;top:807.5px;width:40px;height:40px;" viewBox="0 0 24 24"><path fill="#212121" d="M19 5v14H5V5h14m0-2H5c-1.1 0-2 .9-2 2v14c0 1.1.9 2 2 2h14c1.1 0 2-.9 2-2V5c0-1.1-.9-2-2-2z"/></svg>
<div class="a" style="left:2100px;top:807.5px;font-size:28px;line-height:40px;color:#212121;font-weight:400;">表(JP,EP,TW)</div>
<svg class="a" style="left:1739px;top:883.5px;width:40px;height:40px;" viewBox="0 0 24 24"><path fill="#212121" d="M19 5v14H5V5h14m0-2H5c-1.1 0-2 .9-2 2v14c0 1.1.9 2 2 2h14c1.1 0 2-.9 2-2V5c0-1.1-.9-2-2-2z"/></svg>
<div class="a" style="left:1798px;top:883.5px;font-size:28px;line-height:40px;color:#212121;font-weight:400;">化学式(JP,EP,TW)</div>
<svg class="a" style="left:2069px;top:883.5px;width:40px;height:40px;" viewBox="0 0 24 24"><path fill="#212121" d="M19 5v14H5V5h14m0-2H5c-1.1 0-2 .9-2 2v14c0 1.1.9 2 2 2h14c1.1 0 2-.9 2-2V5c0-1.1-.9-2-2-2z"/></svg>
<div class="a" style="left:2128px;top:883.5px;font-size:28px;line-height:40px;color:#212121;font-weight:400;">数式(JP,EP,TW)</div>
<svg class="a" style="left:1739px;top:959.5px;width:40px;height:40px;" viewBox="0 0 24 24"><path fill="#212121" d="M19 5v14H5V5h14m0-2H5c-1.1 0-2 .9-2 2v14c0 1.1.9 2 2 2h14c1.1 0 2-.9 2-2V5c0-1.1-.9-2-2-2z"/></svg>
<div class="a" style="left:1798px;top:959.5px;font-size:28px;line-height:40px;color:#212121;font-weight:400;">技術分野(JP,US)</div>
<svg class="a" style="left:2050px;top:959.5px;width:40px;height:40px;" viewBox="0 0 24 24"><path fill="#212121" d="M19 5v14H5V5h14m0-2H5c-1.1 0-2 .9-2 2v14c0 1.1.9 2 2 2h14c1.1 0 2-.9 2-2V5c0-1.1-.9-2-2-2z"/></svg>
<div class="a" style="left:2109px;top:959.5px;font-size:28px;line-height:40px;color:#212121;font-weight:400;">背景技術(JP,US)</div>
<svg class="a" style="left:1739px;top:1035.5px;width:40px;height:40px;" viewBox="0 0 24 24"><path fill="#212121" d="M19 5v14H5V5h14m0-2H5c-1.1 0-2 .9-2 2v14c0 1.1.9 2 2 2h14c1.1 0 2-.9 2-2V5c0-1.1-.9-2-2-2z"/></svg>
<div class="a" style="left:1798px;top:1035.5px;font-size:28px;line-height:40px;color:#212121;font-weight:400;">発明<span class="k">の</span>概要(JP,US)</div>
<svg class="a" style="left:2079px;top:1035.5px;width:40px;height:40px;" viewBox="0 0 24 24"><path fill="#212121" d="M19 5v14H5V5h14m0-2H5c-1.1 0-2 .9-2 2v14c0 1.1.9 2 2 2h14c1.1 0 2-.9 2-2V5c0-1.1-.9-2-2-2z"/></svg>
<div class="a" style="left:2138px;top:1035.5px;font-size:28px;line-height:40px;color:#212121;font-weight:400;">課題(JP,US)</div>
<svg class="a" style="left:1739px;top:1111.5px;width:40px;height:40px;" viewBox="0 0 24 24"><path fill="#212121" d="M19 5v14H5V5h14m0-2H5c-1.1 0-2 .9-2 2v14c0 1.1.9 2 2 2h14c1.1 0 2-.9 2-2V5c0-1.1-.9-2-2-2z"/></svg>
<div class="a" style="left:1798px;top:1111.5px;font-size:28px;line-height:40px;color:#212121;font-weight:400;">解決手段(JP,US)</div>
<svg class="a" style="left:2050px;top:1111.5px;width:40px;height:40px;" viewBox="0 0 24 24"><path fill="#212121" d="M19 5v14H5V5h14m0-2H5c-1.1 0-2 .9-2 2v14c0 1.1.9 2 2 2h14c1.1 0 2-.9 2-2V5c0-1.1-.9-2-2-2z"/></svg>
<div class="a" style="left:2109px;top:1111.5px;font-size:28px;line-height:40px;color:#212121;font-weight:400;">効果(JP,US)</div>
<svg class="a" style="left:1739px;top:1187.5px;width:40px;height:40px;" viewBox="0 0 24 24"><path fill="#212121" d="M19 5v14H5V5h14m0-2H5c-1.1 0-2 .9-2 2v14c0 1.1.9 2 2 2h14c1.1 0 2-.9 2-2V5c0-1.1-.9-2-2-2z"/></svg>
<div class="a" style="left:1798px;top:1187.5px;font-size:28px;line-height:40px;color:#212121;font-weight:400;">図面説明(JP,US)</div>
<svg class="a" style="left:2050px;top:1187.5px;width:40px;height:40px;" viewBox="0 0 24 24"><path fill="#212121" d="M19 5v14H5V5h14m0-2H5c-1.1 0-2 .9-2 2v14c0 1.1.9 2 2 2h14c1.1 0 2-.9 2-2V5c0-1.1-.9-2-2-2z"/></svg>
<div class="a" style="left:2109px;top:1187.5px;font-size:28px;line-height:40px;color:#212121;font-weight:400;">符号説明(JP,US)</div>
<div class="a" style="left:1727px;top:1286px;width:852px;height:78px;border:2px solid #c4c4c4;border-radius:8px"></div>
<div class="a" style="left:1747px;top:1272px;width:184px;height:28px;background:#fff"></div>
<div class="a" style="left:1756px;top:1269.0px;font-size:24px;line-height:30px;color:#444;font-weight:400;">解析対象<span class="k">の</span>段落</div>
<svg class="a" style="left:2515px;top:1301.0px;width:48px;height:48px;" viewBox="0 0 24 24"><path fill="#757575" d="M7 10l5 5 5-5z"/></svg>
<div class="a" style="left:1727px;top:1422px;width:852px;height:79px;border:2px solid #c4c4c4;border-radius:8px"></div>
<div class="a" style="left:1747px;top:1408px;width:256px;height:28px;background:#fff"></div>
<div class="a" style="left:1756px;top:1405.0px;font-size:24px;line-height:30px;color:#444;font-weight:400;">解析対象<span class="k">の</span>見出<span class="k">し</span>項目</div>
<svg class="a" style="left:2515px;top:1437.5px;width:48px;height:48px;" viewBox="0 0 24 24"><path fill="#757575" d="M7 10l5 5 5-5z"/></svg>
<div class="a" style="left:1727px;top:1558px;width:852px;height:79px;border:2px solid #c4c4c4;border-radius:8px"></div>
<div class="a" style="left:1747px;top:1544px;width:184px;height:28px;background:#fff"></div>
<div class="a" style="left:1756px;top:1541.0px;font-size:24px;line-height:30px;color:#444;font-weight:400;">解析対象<span class="k">の</span>図面</div>
<svg class="a" style="left:2515px;top:1573.5px;width:48px;height:48px;" viewBox="0 0 24 24"><path fill="#757575" d="M7 10l5 5 5-5z"/></svg>
<div class="a" style="left:1707px;top:170px;width:905px;height:1481px;border:6px solid #fc2d6e;border-radius:3px"></div>
<div class="a" style="left:1709px;top:1680.0px;font-size:32px;line-height:44px;color:#212121;font-weight:700;"><span class="k">ト</span>ー<span class="k">クン</span>数超過時<span class="k">の</span>処理</div>
<svg class="a" style="left:1723px;top:1744px;width:40px;height:40px;" viewBox="0 0 24 24"><path fill="#212121" d="M12 2C6.48 2 2 6.48 2 12s4.48 10 10 10 10-4.48 10-10S17.52 2 12 2zm0 18c-4.42 0-8-3.58-8-8s3.58-8 8-8 8 3.58 8 8-3.58 8-8 8z"/></svg>
<div class="a" style="left:1782px;top:1744.0px;font-size:28px;line-height:40px;color:#212121;font-weight:400;">重要箇所抽出(RAG)</div>
<svg class="a" style="left:2075px;top:1744px;width:40px;height:40px;" viewBox="0 0 24 24"><path fill="#38aa9a" d="M12 2C6.48 2 2 6.48 2 12s4.48 10 10 10 10-4.48 10-10S17.52 2 12 2zm0 18c-4.42 0-8-3.58-8-8s3.58-8 8-8 8 3.58 8 8-3.58 8-8 8zM12 7c-2.76 0-5 2.240-5 5s2.24 5 5 5 5-2.24 5-5-2.24-5-5-5z"/></svg>
<div class="a" style="left:2134px;top:1744.0px;font-size:28px;line-height:40px;color:#212121;font-weight:400;">先頭<span class="k">から</span></div>
<svg class="a" style="left:2290px;top:1744px;width:40px;height:40px;" viewBox="0 0 24 24"><path fill="#212121" d="M12 2C6.48 2 2 6.48 2 12s4.48 10 10 10 10-4.48 10-10S17.52 2 12 2zm0 18c-4.42 0-8-3.58-8-8s3.58-8 8-8 8 3.58 8 8-3.58 8-8 8z"/></svg>
<div class="a" style="left:2349px;top:1744.0px;font-size:28px;line-height:40px;color:#212121;font-weight:400;"><span class="k">なし</span></div>
<div class="a" style="left:1695px;top:1671px;width:771px;height:120px;border:6px solid #fc2d6e;border-radius:3px"></div>
</body></html>
